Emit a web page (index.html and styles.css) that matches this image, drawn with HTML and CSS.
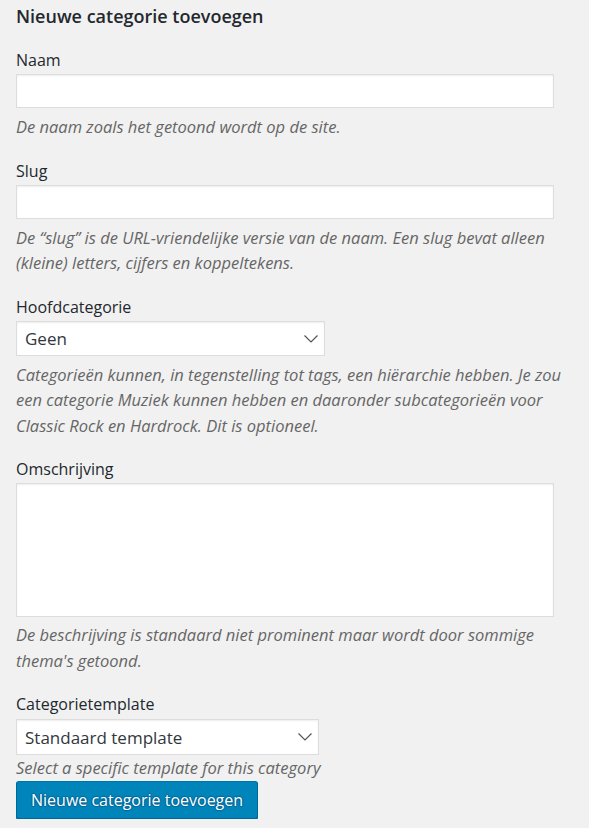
FILE: index.html
```html
<!DOCTYPE html>
<html lang="nl">
<head>
<meta charset="utf-8">
<title>Nieuwe categorie toevoegen</title>
<link rel="stylesheet" href="styles.css">
</head>
<body>
<div class="form-wrap">
  <h2 class="title">Nieuwe categorie toevoegen</h2>
  <form class="add-tag">
    <div class="field">
      <label class="label" for="tag-name">Naam</label>
      <input class="text-input" type="text" id="tag-name">
      <p class="description">De naam zoals het getoond wordt op de site.</p>
    </div>
    <div class="field">
      <label class="label" for="tag-slug">Slug</label>
      <input class="text-input" type="text" id="tag-slug">
      <p class="description">De “slug” is de URL-vriendelijke versie van de naam. Een slug bevat alleen (kleine) letters, cijfers en koppeltekens.</p>
    </div>
    <div class="field">
      <label class="label" for="parent">Hoofdcategorie</label>
      <div class="select-wrap select-parent">
        <select class="select" id="parent"><option>Geen</option></select>
        <svg class="chevron" width="14" height="8" viewBox="0 0 14 8"><path d="M0.5 0.5 L7 7 L13.5 0.5" fill="none" stroke="#555" stroke-width="1.2"/></svg>
      </div>
      <p class="description">Categorieën kunnen, in tegenstelling tot tags, een hiërarchie hebben. Je zou een categorie Muziek kunnen hebben en daaronder subcategorieën voor Classic Rock en Hardrock. Dit is optioneel.</p>
    </div>
    <div class="field">
      <label class="label" for="tag-description">Omschrijving</label>
      <textarea class="textarea" id="tag-description"></textarea>
      <p class="description desc-after-area">De beschrijving is standaard niet prominent maar wordt door sommige thema's getoond.</p>
    </div>
    <div class="field field-last">
      <label class="label label-template" for="template">Categorietemplate</label>
      <div class="select-wrap select-template">
        <select class="select" id="template"><option>Standaard template</option></select>
        <svg class="chevron" width="14" height="8" viewBox="0 0 14 8"><path d="M0.5 0.5 L7 7 L13.5 0.5" fill="none" stroke="#555" stroke-width="1.2"/></svg>
      </div>
      <p class="description desc-tight">Select a specific template for this category</p>
    </div>
    <div class="submit">
      <button type="button" class="button-primary">Nieuwe categorie toevoegen</button>
    </div>
  </form>
</div>
</body>
</html>
```
FILE: styles.css
```css
html, body {
  margin: 0;
  padding: 0;
  background: #f1f1f1;
}

body {
  font-family: "Open Sans", "Noto Sans", "Liberation Sans", sans-serif;
  color: #23282d;
}

.form-wrap {
  padding: 0 7px 0 16px;
}

.title {
  margin: 4px 0 0;
  font-size: 18px;
  line-height: 24px;
  font-weight: 600;
  color: #23282d;
}

.add-tag {
  margin: 0;
  padding-top: 21px;
}

.field {
  margin: 0 0 20px;
}

.field-last {
  margin-bottom: 0;
}

.label {
  display: block;
  font-size: 16px;
  line-height: 22px;
  margin-bottom: 3px;
  color: #23282d;
}

.label-template {
  margin-bottom: 4px;
}

.text-input {
  display: block;
  box-sizing: border-box;
  width: 95%;
  height: 34px;
  margin: 0;
  padding: 3px 8px;
  border: 1px solid #ddd;
  background: #fff;
  box-shadow: inset 0 1px 2px rgba(0, 0, 0, 0.07);
  font: inherit;
  font-size: 16px;
  outline: none;
}

.textarea {
  display: block;
  box-sizing: border-box;
  width: 95%;
  height: 134px;
  margin: 0;
  padding: 3px 8px;
  border: 1px solid #ddd;
  background: #fff;
  box-shadow: inset 0 1px 2px rgba(0, 0, 0, 0.07);
  font: inherit;
  resize: none;
  outline: none;
}

.select-wrap {
  position: relative;
  width: 309px;
}

.select-template {
  width: 303px;
}

.select {
  display: block;
  box-sizing: border-box;
  width: 100%;
  height: 35px;
  margin: 0;
  padding: 0 30px 0 8px;
  border: 1px solid #ddd;
  border-radius: 0;
  background: #fff;
  box-shadow: inset 0 1px 2px rgba(0, 0, 0, 0.07);
  font-family: inherit;
  font-size: 17px;
  color: #32373c;
  -webkit-appearance: none;
  appearance: none;
  outline: none;
}

.select-template .select {
  height: 36px;
}

.chevron {
  position: absolute;
  right: 7px;
  top: 14px;
  pointer-events: none;
}

.description {
  margin: 6px 0 0;
  font-size: 16.5px;
  line-height: 25.5px;
  font-style: italic;
  color: #666;
}

.desc-after-area {
  margin-top: 5px;
}

.desc-tight {
  margin-top: 0;
}

.submit {
  margin: 0;
  padding: 0;
}

.button-primary {
  display: inline-block;
  box-sizing: border-box;
  height: 38px;
  padding: 0 14px;
  margin: 0;
  border: 1px solid #0073aa;
  border-color: #0073aa #006799 #006799;
  border-radius: 3px;
  background: #0085ba;
  box-shadow: 0 1px 0 #006799;
  color: #fff;
  font-family: inherit;
  font-size: 16px;
  line-height: 36px;
  text-shadow: 0 -1px 1px #006799, 1px 0 1px #006799, 0 1px 1px #006799, -1px 0 1px #006799;
  cursor: pointer;
}
```
